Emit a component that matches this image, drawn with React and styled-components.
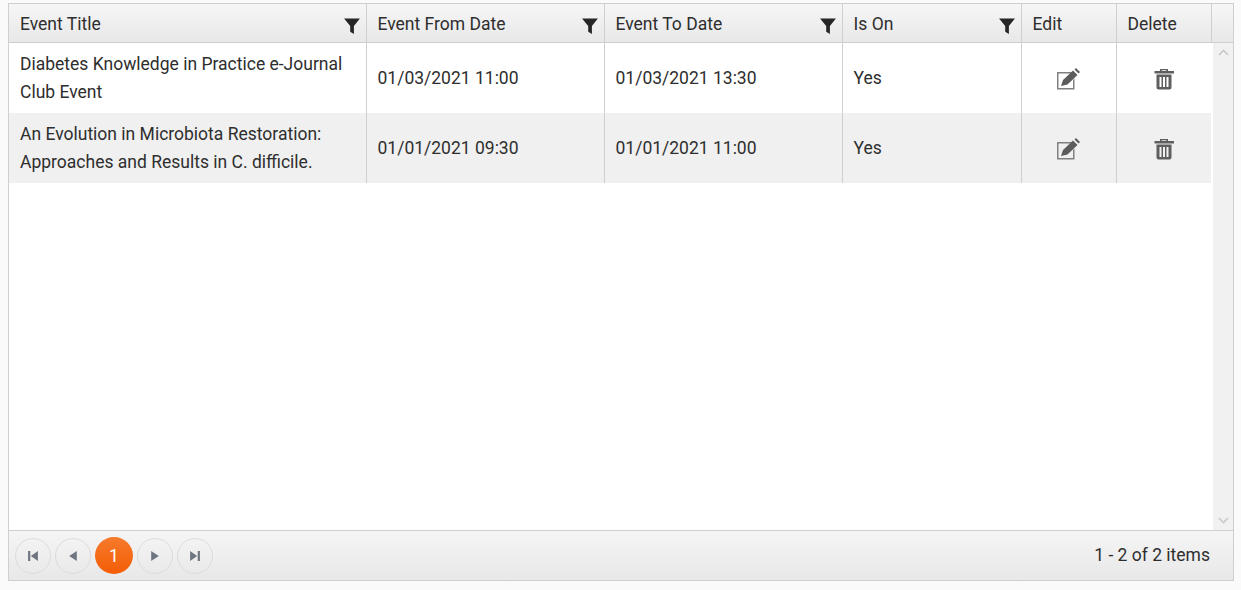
import React from "react";
import styled, { createGlobalStyle } from "styled-components";

const Global = createGlobalStyle`
  html, body { margin: 0; padding: 0; background: #fafafa; height: 590px; overflow: hidden; }
  body { font-family: Roboto, "Liberation Sans", sans-serif; }
`;

const COLS = "358px 238px 238px 179px 95px 95px 1fr";

const Page = styled.div`
  padding: 3px 7px 0 8px;
`;
const Grid = styled.div`
  display: flex;
  flex-direction: column;
  height: 578px;
  box-sizing: border-box;
  background: #fff;
  border: 1px solid #cfcfcf;
  color: #2e2e2e;
  font-size: 17.5px;
`;
const Header = styled.div`
  display: grid;
  grid-template-columns: ${COLS};
  height: 39px;
  flex: none;
  box-sizing: border-box;
  border-bottom: 1px solid #cfcfcf;
  background: linear-gradient(#f6f6f6, #e9e8e8);
`;
const HeadCell = styled.div`
  display: flex;
  align-items: center;
  justify-content: space-between;
  padding: 2px 5px 0 11px;
  box-sizing: border-box;
  border-right: ${(p) => (p.$last ? "none" : "1px solid #cfcfcf")};
  line-height: 36px;
  &:not(:first-child) { padding-left: 10.5px; }
`;
const FilterIcon = styled.svg`
  width: 18px;
  height: 18px;
  margin-top: 3px;
  flex: none;
`;
const Body = styled.div`
  flex: 1;
  display: flex;
  min-height: 0;
`;
const Rows = styled.div`
  width: 1202px;
  flex: none;
`;
const Row = styled.div`
  display: grid;
  grid-template-columns: 358px 238px 238px 179px 95px 94px;
  height: 70px;
  background: ${(p) => (p.$alt ? "#f0f0f0" : "#fff")};
`;
const Cell = styled.div`
  display: flex;
  align-items: center;
  justify-content: ${(p) => (p.$center ? "center" : "flex-start")};
  box-sizing: border-box;
  padding: 0 11px;
  line-height: 28px;
  border-right: ${(p) => (p.$last ? "none" : "1px solid #cfcfcf")};
  &:not(:first-child) { padding-left: 10.5px; }
`;
const EditCell = styled(Cell)`
  padding: 0 12px 0 10px;
  &:not(:first-child) { padding-left: 10px; }
`;
const Track = styled.div`
  width: 20px;
  margin-left: 2px;
  background: #f1f1f1;
  display: flex;
  flex-direction: column;
  justify-content: space-between;
  align-items: center;
  padding: 6px 0;
  box-sizing: border-box;
`;
const Chevron = styled.svg`
  width: 11px;
  height: 7px;
`;
const Footer = styled.div`
  flex: none;
  height: 50px;
  box-sizing: border-box;
  border-top: 1px solid #cfcfcf;
  background: linear-gradient(#f5f5f5, #e9e8e8);
  display: flex;
  align-items: center;
  justify-content: space-between;
  padding: 0 23px 0 6px;
`;
const Pager = styled.div`
  display: flex;
  align-items: center;
  gap: 4px;
`;
const PageButton = styled.div`
  width: 36px;
  height: 36px;
  box-sizing: border-box;
  border-radius: 50%;
  border: 1px solid #dcdcdc;
  display: flex;
  align-items: center;
  justify-content: center;
`;
const CurrentPage = styled.div`
  width: 38px;
  height: 37px;
  border-radius: 50%;
  background: linear-gradient(#f67a2c, #f45d05);
  color: #fff;
  display: flex;
  align-items: center;
  justify-content: center;
  font-size: 17.5px;
`;
const Info = styled.div`
  color: #2e2e2e;
  padding-bottom: 2px;
`;
const NavIcon = styled.svg`
  width: 12px;
  height: 12px;
`;
const ActionIcon = styled.svg`
  width: 24px;
  height: 24px;
  margin-top: 2px;
`;

const Filter = () => (
  <FilterIcon viewBox="0 0 17 17">
    <path d="M1 1.500h15L10.300 8.500V16L6.800 14V8.500z" fill="#262626" />
  </FilterIcon>
);

const EditIcon = () => (
  <ActionIcon viewBox="0 0 24 24">
    <path d="M1 5h15L14.500 6.500H2.500v14.500H17V13l1.500-1.500V22.500H1z" fill="#808080" />
    <path d="M5 19l2-6L17 3.500 21.500 8 11.500 17.500z" fill="#5c5c5c" />
    <path d="M18.500 2.500l1.500-1.500 4 4L22.500 6.500z" fill="#5c5c5c" />
  </ActionIcon>
);

const TrashIcon = () => (
  <ActionIcon viewBox="0 0 24 24">
    <path d="M8 4V2h8v2h6v2.500H2.500V4zM9.700 4h4.600V3.300H9.700z" fill="#5f5f5f" fillRule="evenodd" />
    <path d="M4.500 7.500h15v13a2 2 0 0 1-2 2h-11a2 2 0 0 1-2-2zM7.500 10v10h2v-10zM11 10v10h2v-10zM14.500 10v10h2v-10z" fill="#5f5f5f" fillRule="evenodd" />
  </ActionIcon>
);

const rows = [
  ["Diabetes Knowledge in Practice e-Journal Club Event", "01/03/2021 11:00", "01/03/2021 13:30", "Yes"],
  ["An Evolution in Microbiota Restoration: Approaches and Results in C. difficile.", "01/01/2021 09:30", "01/01/2021 11:00", "Yes"],
];

export default function App() {
  return (
    <Page>
      <Global />
      <Grid>
        <Header>
          <HeadCell>Event Title<Filter /></HeadCell>
          <HeadCell>Event From Date<Filter /></HeadCell>
          <HeadCell>Event To Date<Filter /></HeadCell>
          <HeadCell>Is On<Filter /></HeadCell>
          <HeadCell>Edit</HeadCell>
          <HeadCell>Delete</HeadCell>
          <HeadCell $last />
        </Header>
        <Body>
          <Rows>
            {rows.map((r, i) => (
              <Row key={r[0]} $alt={i % 2 === 1}>
                <Cell>{r[0]}</Cell>
                <Cell>{r[1]}</Cell>
                <Cell>{r[2]}</Cell>
                <Cell>{r[3]}</Cell>
                <EditCell $center><EditIcon /></EditCell>
                <Cell $center $last><TrashIcon /></Cell>
              </Row>
            ))}
          </Rows>
          <Track>
            <Chevron viewBox="0 0 11 7"><path d="M1 6l4.500-4.500L10 6" fill="none" stroke="#c9c9c9" strokeWidth="1.6" /></Chevron>
            <Chevron viewBox="0 0 11 7"><path d="M1 1l4.500 4.500L10 1" fill="none" stroke="#c9c9c9" strokeWidth="1.6" /></Chevron>
          </Track>
        </Body>
        <Footer>
          <Pager>
            <PageButton><NavIcon viewBox="0 0 11 11"><path d="M1 1h2v9H1zM10 1v9L3.500 5.500z" fill="#6f7680" /></NavIcon></PageButton>
            <PageButton><NavIcon viewBox="0 0 11 11"><path d="M9 1v9L2 5.500z" fill="#6f7680" /></NavIcon></PageButton>
            <CurrentPage>1</CurrentPage>
            <PageButton><NavIcon viewBox="0 0 11 11"><path d="M2 1v9l7-4.500z" fill="#6f7680" /></NavIcon></PageButton>
            <PageButton><NavIcon viewBox="0 0 11 11"><path d="M1 1v9l6.500-4.500zM8 1h2v9H8z" fill="#6f7680" /></NavIcon></PageButton>
          </Pager>
          <Info>1 - 2 of 2 items</Info>
        </Footer>
      </Grid>
    </Page>
  );
}
